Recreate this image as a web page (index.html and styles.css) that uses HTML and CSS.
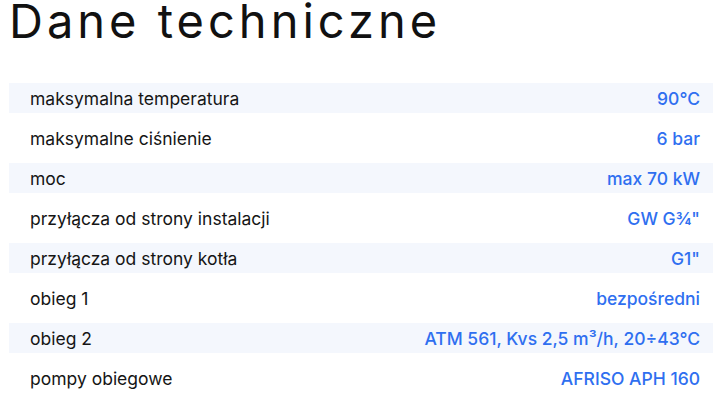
FILE: index.html
```html
<!DOCTYPE html>
<html lang="pl">
<head>
<meta charset="utf-8">
<link rel="stylesheet" href="styles.css">
</head>
<body>
<h1 class="title">Dane techniczne</h1>
<div class="specs">
  <div class="row alt"><span class="label">maksymalna temperatura</span><span class="value">90°C</span></div>
  <div class="row"><span class="label">maksymalne ciśnienie</span><span class="value">6 bar</span></div>
  <div class="row alt"><span class="label">moc</span><span class="value">max 70 kW</span></div>
  <div class="row"><span class="label">przyłącza od strony instalacji</span><span class="value">GW G¾"</span></div>
  <div class="row alt"><span class="label">przyłącza od strony kotła</span><span class="value">G1"</span></div>
  <div class="row"><span class="label">obieg 1</span><span class="value">bezpośredni</span></div>
  <div class="row alt"><span class="label">obieg 2</span><span class="value">ATM 561, Kvs 2,5 m³/h, 20÷43°C</span></div>
  <div class="row"><span class="label">pompy obiegowe</span><span class="value">AFRISO APH 160</span></div>
</div>
</body>
</html>
```
FILE: styles.css
```css
html, body {
  margin: 0;
  padding: 0;
  background: #ffffff;
}
body {
  font-family: Inter, "Noto Sans", sans-serif;
  color: #111111;
}
.title {
  margin: 0;
  padding: 0 0 0 9px;
  font-family: Inter, sans-serif;
  font-weight: 400;
  font-size: 47px;
  line-height: 42px;
  letter-spacing: 4px;
  color: #111111;
}
.specs {
  margin: 41px 4px 0 9px;
  display: flex;
  flex-direction: column;
  gap: 10px;
}
.row {
  height: 30px;
  display: flex;
  align-items: center;
  justify-content: space-between;
  padding: 0 13px 0 21px;
  font-size: 17.5px;
}
.row.alt {
  background: #f4f7fd;
}
.label {
  color: #151515;
}
.value {
  color: #2f6ff0;
  font-weight: 500;
}
```
